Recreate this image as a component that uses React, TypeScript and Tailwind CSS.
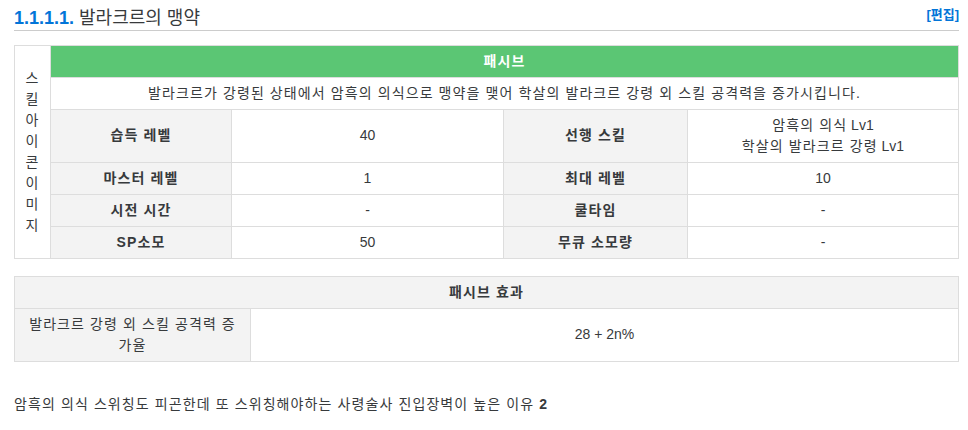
const font = { fontFamily: '"Liberation Sans", "Noto Sans CJK KR", sans-serif' };

const rows = [
  { l1: "습득 레벨", v1: "40", l2: "선행 스킬", v2: ["암흑의 의식", "학살의 발라크르 강령"], lv: true },
  { l1: "마스터 레벨", v1: "1", l2: "최대 레벨", v2: ["10"], lv: false },
  { l1: "시전 시간", v1: "-", l2: "쿨타임", v2: ["-"], lv: false },
  { l1: "SP소모", v1: "50", l2: "무큐 소모량", v2: ["-"], lv: false },
];

const cell = "border border-[#ddd] px-[5px] py-[5px] leading-[21px] text-center";
const label = `${cell} bg-[#f3f3f3] font-bold`;

export default function App() {
  return (
    <div className="w-[968px] h-[430px] bg-white text-[#373a3c] text-[14px] px-[14px] pr-[9px]" style={font}>
      <div className="flex items-end justify-between border-b border-[#ccc] pt-[5px] pb-[1px]">
        <h2 className="text-[18px] leading-[22px]">
          <span className="font-bold text-[#0275d8]">1.1.1.1.</span> 발라크르의 맹약
        </h2>
        <a className="text-[13px] font-bold text-[#0275d8] mb-[4px]">[편집]</a>
      </div>

      <div className="tracking-[1.1px]">
        <table className="w-full mt-[14px] border-collapse border border-[#ddd] table-fixed">
          <colgroup>
            <col className="w-[36px]" />
            <col className="w-[181px]" />
            <col className="w-[272px]" />
            <col className="w-[184px]" />
            <col />
          </colgroup>
          <tbody>
            <tr>
              <td rowSpan={6} className="border border-[#ddd] text-center leading-[21px] px-0">
                {"스킬아이콘이미지".split("").map((c, i) => (
                  <div key={i}>{c}</div>
                ))}
              </td>
              <td colSpan={4} className={`${cell} bg-[#5bc674] text-white font-bold`}>
                패시브
              </td>
            </tr>
            <tr>
              <td colSpan={4} className={cell}>
                발라크르가 강령된 상태에서 암흑의 의식으로 맹약을 맺어 학살의 발라크르 강령 외 스킬 공격력을 증가시킵니다.
              </td>
            </tr>
            {rows.map((r) => (
              <tr key={r.l1}>
                <td className={label}>{r.l1}</td>
                <td className={`${cell} tracking-normal`}>{r.v1}</td>
                <td className={label}>{r.l2}</td>
                <td className={r.lv ? cell : `${cell} tracking-normal`}>
                  {r.v2.map((t) => (
                    <div key={t}>
                      {t}
                      {r.lv && <span className="tracking-normal"> Lv1</span>}
                    </div>
                  ))}
                </td>
              </tr>
            ))}
          </tbody>
        </table>

        <table className="w-full mt-[17px] border-collapse border border-[#ddd] table-fixed">
          <colgroup>
            <col className="w-[236px]" />
            <col />
          </colgroup>
          <tbody>
            <tr>
              <td colSpan={2} className={label}>
                패시브 효과
              </td>
            </tr>
            <tr>
              <td className={`${cell} bg-[#f3f3f3] px-[14px]`}>발라크르 강령 외 스킬 공격력 증가율</td>
              <td className={`${cell} tracking-normal`}>28 + 2n%</td>
            </tr>
          </tbody>
        </table>

        <p className="mt-[32px] leading-[21px]">
          암흑의 의식 스위칭도 피곤한데 또 스위칭해야하는 사령술사 진입장벽이 높은 이유 <b className="tracking-normal">2</b>
        </p>
      </div>
    </div>
  );
}
